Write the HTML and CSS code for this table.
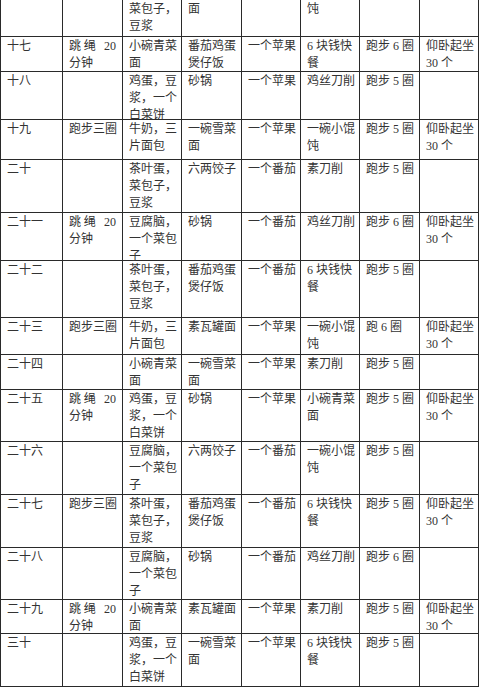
FILE: index.html
```html
<!DOCTYPE html>
<html lang="zh-CN">
<head>
<meta charset="utf-8">
<title>减肥计划表</title>
<link rel="stylesheet" href="styles.css">
</head>
<body>
<div class="sheet">
  <div class="c"></div><div class="c"></div><div class="c">菜包子，<br>豆浆</div><div class="c">面</div><div class="c"></div><div class="c">饨</div><div class="c"></div><div class="c"></div>

  <div class="c">十七</div><div class="c"><span class="jl">跳绳 20</span>分钟</div><div class="c">小碗青菜<br>面</div><div class="c">番茄鸡蛋<br>煲仔饭</div><div class="c">一个苹果</div><div class="c">6 块钱快<br>餐</div><div class="c">跑步 6 圈</div><div class="c">仰卧起坐<br>30 个</div>

  <div class="c">十八</div><div class="c"></div><div class="c">鸡蛋，豆<br>浆，一个<br>白菜饼</div><div class="c">砂锅</div><div class="c">一个苹果</div><div class="c">鸡丝刀削</div><div class="c">跑步 5 圈</div><div class="c"></div>

  <div class="c">十九</div><div class="c">跑步三圈</div><div class="c">牛奶，三<br>片面包</div><div class="c">一碗雪菜<br>面</div><div class="c">一个苹果</div><div class="c">一碗小馄<br>饨</div><div class="c">跑步 5 圈</div><div class="c">仰卧起坐<br>30 个</div>

  <div class="c">二十</div><div class="c"></div><div class="c">茶叶蛋，<br>菜包子，<br>豆浆</div><div class="c">六两饺子</div><div class="c">一个番茄</div><div class="c">素刀削</div><div class="c">跑步 5 圈</div><div class="c"></div>

  <div class="c">二十一</div><div class="c"><span class="jl">跳绳 20</span>分钟</div><div class="c">豆腐脑，<br>一个菜包<br>子</div><div class="c">砂锅</div><div class="c">一个番茄</div><div class="c">鸡丝刀削</div><div class="c">跑步 6 圈</div><div class="c">仰卧起坐<br>30 个</div>

  <div class="c">二十二</div><div class="c"></div><div class="c">茶叶蛋，<br>菜包子，<br>豆浆</div><div class="c">番茄鸡蛋<br>煲仔饭</div><div class="c">一个番茄</div><div class="c">6 块钱快<br>餐</div><div class="c">跑步 5 圈</div><div class="c"></div>

  <div class="c">二十三</div><div class="c">跑步三圈</div><div class="c">牛奶，三<br>片面包</div><div class="c">素瓦罐面</div><div class="c">一个苹果</div><div class="c">一碗小馄<br>饨</div><div class="c">跑 6 圈</div><div class="c">仰卧起坐<br>30 个</div>

  <div class="c">二十四</div><div class="c"></div><div class="c">小碗青菜<br>面</div><div class="c">一碗雪菜<br>面</div><div class="c">一个苹果</div><div class="c">素刀削</div><div class="c">跑步 5 圈</div><div class="c"></div>

  <div class="c">二十五</div><div class="c"><span class="jl">跳绳 20</span>分钟</div><div class="c">鸡蛋，豆<br>浆，一个<br>白菜饼</div><div class="c">砂锅</div><div class="c">一个苹果</div><div class="c">小碗青菜<br>面</div><div class="c">跑步 5 圈</div><div class="c">仰卧起坐<br>30 个</div>

  <div class="c">二十六</div><div class="c"></div><div class="c">豆腐脑，<br>一个菜包<br>子</div><div class="c">六两饺子</div><div class="c">一个番茄</div><div class="c">一碗小馄<br>饨</div><div class="c">跑步 5 圈</div><div class="c"></div>

  <div class="c">二十七</div><div class="c">跑步三圈</div><div class="c">茶叶蛋，<br>菜包子，<br>豆浆</div><div class="c">番茄鸡蛋<br>煲仔饭</div><div class="c">一个番茄</div><div class="c">6 块钱快<br>餐</div><div class="c">跑步 5 圈</div><div class="c">仰卧起坐<br>30 个</div>

  <div class="c">二十八</div><div class="c"></div><div class="c">豆腐脑，<br>一个菜包<br>子</div><div class="c">砂锅</div><div class="c">一个番茄</div><div class="c">鸡丝刀削</div><div class="c">跑步 6 圈</div><div class="c"></div>

  <div class="c">二十九</div><div class="c"><span class="jl">跳绳 20</span>分钟</div><div class="c">小碗青菜<br>面</div><div class="c">素瓦罐面</div><div class="c">一个苹果</div><div class="c">素刀削</div><div class="c">跑步 5 圈</div><div class="c">仰卧起坐<br>30 个</div>

  <div class="c">三十</div><div class="c"></div><div class="c">鸡蛋，豆<br>浆，一个<br>白菜饼</div><div class="c">一碗雪菜<br>面</div><div class="c">一个苹果</div><div class="c">6 块钱快<br>餐</div><div class="c">跑步 5 圈</div><div class="c"></div>
</div>
</body>
</html>
```

FILE: styles.css
```css
html, body {
  margin: 0;
  padding: 0;
  background: #ffffff;
}

body {
  font-family: "Liberation Serif", "Noto Sans CJK SC", serif;
  font-size: 12px;
  color: #333333;
}

.sheet {
  display: grid;
  width: 479px;
  box-sizing: border-box;
  border-left: 1px solid #2a2a2a;
  grid-template-columns: 62px 60px 59px 60px 59px 59px 60px 59px;
  grid-template-rows: 37px 35px 48px 40px 53px 48px 57px 37px 35px 52px 53px 53px 52px 34px 53px;
}

.c {
  box-sizing: border-box;
  border-right: 1px solid #2a2a2a;
  border-bottom: 1px solid #2a2a2a;
  padding: 1px 3px 0 6px;
  line-height: 17px;
  white-space: nowrap;
  overflow: visible;
  min-width: 0;
  min-height: 0;
}

.jl {
  display: block;
  width: 47px;
  text-align: justify;
  text-align-last: justify;
  white-space: normal;
}
```
